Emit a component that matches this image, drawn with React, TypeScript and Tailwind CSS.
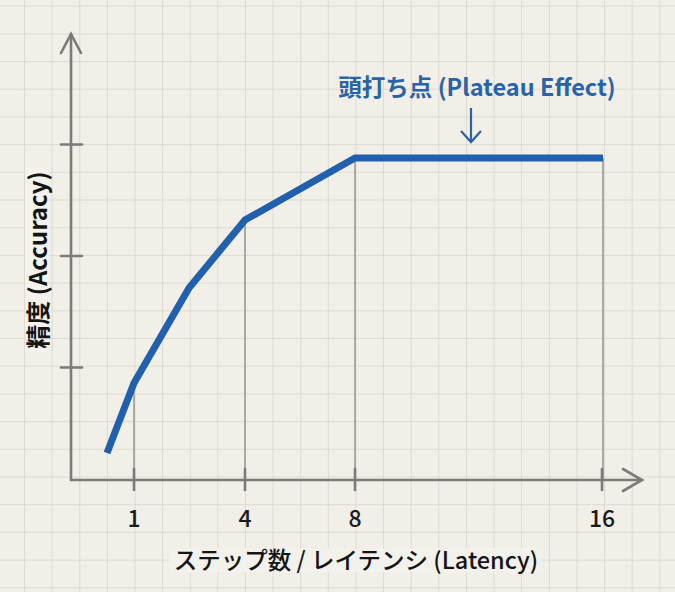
import React from 'react';

const ticksX = [
  { x: 134, label: '1' },
  { x: 245, label: '4' },
  { x: 355, label: '8' },
  { x: 602, label: '16' },
];

const curve = '107,453 134,383 189,288 245,220 355,158 603,158';

const App: React.FC = () => {
  return (
    <main className="relative w-[675px] h-[592px] overflow-hidden bg-[#f1efe8] font-['Noto_Sans_CJK_JP',sans-serif]">
      <svg className="absolute inset-0" width="675" height="592" viewBox="0 0 675 592">
        <defs>
          <pattern id="grid" x="-3.6" y="5.6" width="27.62" height="27.7" patternUnits="userSpaceOnUse">
            <path d="M0 0V27.7M0 0H27.62" stroke="#d8d5cb" strokeWidth="1.6" fill="none" />
          </pattern>
        </defs>
        <rect width="675" height="592" fill="url(#grid)" />

        {/* drop lines */}
        <g stroke="#8f8f8c" strokeWidth="1.4">
          <line x1="134" y1="383" x2="134" y2="480" />
          <line x1="245" y1="220" x2="245" y2="480" />
          <line x1="355" y1="158" x2="355" y2="480" />
          <line x1="603" y1="158" x2="603" y2="480" />
        </g>

        {/* axes */}
        <g stroke="#7b7b79" strokeWidth="2.6" fill="none" strokeLinecap="round">
          <line x1="71" y1="480" x2="71" y2="34" />
          <polyline points="61,53 71,34 81,53" />
          <line x1="71" y1="480" x2="642" y2="480" />
          <polyline points="623,469 642,480 623,491" />
          <line x1="61" y1="144.5" x2="82" y2="144.5" />
          <line x1="61" y1="256" x2="82" y2="256" />
          <line x1="61" y1="367.5" x2="82" y2="367.5" />
          {ticksX.map((t) => (
            <line key={t.x} x1={t.x} y1="469" x2={t.x} y2="490" />
          ))}
        </g>

        <polyline points={curve} fill="none" stroke="#2160ad" strokeWidth="7" strokeLinejoin="miter" />

        {/* plateau arrow */}
        <g stroke="#2a63a6" strokeWidth="2.2" fill="none">
          <line x1="471" y1="108" x2="471" y2="142" />
          <polyline points="461,131 471,142 481,131" />
        </g>
      </svg>

      <span className="absolute left-[477px] top-[87px] -translate-x-1/2 -translate-y-1/2 whitespace-nowrap text-[23.5px] font-bold leading-none text-[#2a63a6]">
        頭打ち点 (Plateau Effect)
      </span>

      {ticksX.map((t) => (
        <span
          key={t.label}
          style={{ left: t.x }}
          className="absolute top-[517px] -translate-x-1/2 -translate-y-1/2 text-[23px] font-medium leading-none text-[#1a1a1a]"
        >
          {t.label}
        </span>
      ))}

      <span className="absolute left-[356px] top-[560px] -translate-x-1/2 -translate-y-1/2 whitespace-nowrap bg-[#f3f1eb] px-1 text-[23.5px] font-medium leading-none text-[#151515]">
        ステップ数 / レイテンシ (Latency)
      </span>

      <span className="absolute left-[37px] top-[260px] -translate-x-1/2 -translate-y-1/2 -rotate-90 whitespace-nowrap bg-[#f4f2ec] px-1 text-[24px] font-bold leading-none text-[#151515]">
        精度 (Accuracy)
      </span>
    </main>
  );
};

export default App;
